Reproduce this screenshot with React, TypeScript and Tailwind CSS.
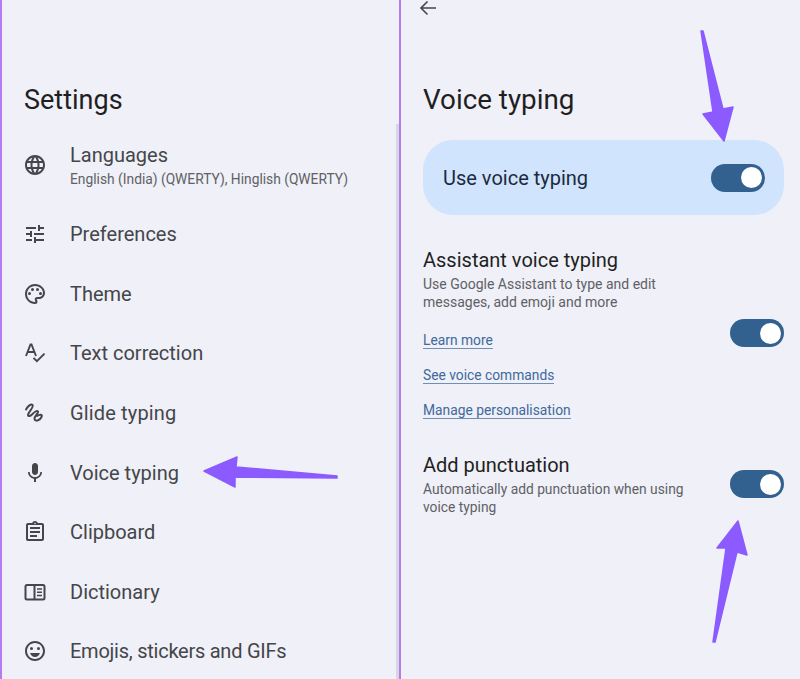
import React from "react";
import { MdLanguage, MdOutlineTune, MdOutlinePalette, MdMic, MdOutlineEmojiEmotions, MdOutlineAssignment } from "react-icons/md";

const SpellIcon = () => (
  <svg width="24" height="24" viewBox="0 0 24 24" fill="none" stroke="currentColor" strokeWidth="1.900">
    <path d="M3 15 7.500 3.500h1L13 15M4.800 11h6.400" />
    <path d="M10.500 16.800l3.400 3.400 7.600-7.600" />
  </svg>
);
const DrawIcon = () => (
  <svg width="24" height="24" viewBox="0 0 24 24" fill="none" stroke="currentColor" strokeWidth="2" strokeLinecap="round">
    <path d="M3 8.500C5 5 8 2.500 9.500 4S7 9.500 5.500 12.500 6.500 16 9 13.500 14 9 15 10.500 11 15 11.500 18 17 19.500 18.500 16 16 13.500 14 15" />
  </svg>
);
const BookIcon = () => (
  <svg width="24" height="24" viewBox="0 0 24 24" fill="none" stroke="currentColor" strokeWidth="2">
    <rect x="2.500" y="5" width="19" height="14.500" rx="1.500" />
    <path d="M11.500 5v14.500" />
    <path strokeWidth="1.500" d="M14 9h5M14 12.200h5M14 15.400h5" />
  </svg>
);

const rows = [
  { icon: <MdOutlineTune size={24} />, label: "Preferences", cls: "" },
  { icon: <MdOutlinePalette size={24} />, label: "Theme", cls: "" },
  { icon: <SpellIcon />, label: "Text correction", cls: "" },
  { icon: <DrawIcon />, label: "Glide typing", cls: "tracking-[0.15px]" },
  { icon: <MdMic size={24} />, label: "Voice typing", cls: "" },
  { icon: <MdOutlineAssignment size={24} />, label: "Clipboard", cls: "" },
  { icon: <BookIcon />, label: "Dictionary", cls: "" },
  { icon: <MdOutlineEmojiEmotions size={24} />, label: "Emojis, stickers and GIFs", cls: "tracking-[-0.25px]" },
];

const Toggle = () => (
  <div className="flex h-[28px] w-[54px] shrink-0 items-center justify-end rounded-full bg-[#33618f] pr-[3px]">
    <div className="h-[21px] w-[21px] rounded-full bg-white" />
  </div>
);

const Link = ({ children }: { children: React.ReactNode }) => (
  <div className="h-[35px]">
    <span className="border-b border-[#6f8fb3] text-[13.800px] leading-[18px] text-[#41699a]">{children}</span>
  </div>
);

export default function App() {
  return (
    <div className="relative flex h-[679px] w-[800px] overflow-hidden bg-[#eff0f8] text-[#444649]" style={{ fontFamily: "Roboto, 'Noto Sans', sans-serif" }}>
      <div className="relative h-full w-[399px] shrink-0 border-l-[2px] border-[#b57bf0] pl-[22px]">
        <h1 className="mt-[82px] text-[27px] leading-[36px] font-normal text-[#1f1f1f]">Settings</h1>
        <div className="mt-[17px] flex h-[60px] items-center">
          <div className="-ml-[1px] w-[47px] shrink-0"><MdLanguage size={24} /></div>
          <div>
            <div className="text-[20px] leading-[26px]">Languages</div>
            <div className="mt-[1px] text-[13.800px] leading-[20px] text-[#5f6165]">English (India) (QWERTY), Hinglish (QWERTY)</div>
          </div>
        </div>
        <div className="mt-[9.500px]">
          {rows.map((r) => (
            <div key={r.label} className="flex h-[59.600px] items-center">
              <div className="-ml-[1px] w-[47px] shrink-0">{r.icon}</div>
              <div className={`text-[20px] leading-[26px] ${r.cls}`}>{r.label}</div>
            </div>
          ))}
        </div>
        <div className="absolute top-[124px] right-0 bottom-0 w-[3px] bg-[#d6d8de]" />
      </div>

      <div className="h-full flex-1 border-l-[2px] border-[#b57bf0] pr-[16px] pl-[22px]">
        <svg className="-mt-[4px] -ml-[7px] block text-[#444649]" width="24" height="24" viewBox="0 0 24 24" fill="none" stroke="currentColor" strokeWidth="1.600">
          <path d="M20 12H5M11.500 5.500 5 12l6.500 6.500" />
        </svg>
        <h1 className="mt-[62px] text-[27.800px] leading-[36px] font-normal text-[#1f1f1f]">Voice typing</h1>
        <div className="mt-[22px] flex h-[75px] items-center justify-between rounded-[30px] bg-[#d1e4fe] pr-[19px] pl-[20px]">
          <span className="text-[20px] text-[#1b2a3c]">Use voice typing</span>
          <Toggle />
        </div>
        <div className="mt-[32px] flex items-start justify-between">
          <div>
            <div className="text-[20px] leading-[26px] text-[#1f1f1f]">Assistant voice typing</div>
            <div className="mt-[3px] text-[14px] leading-[17.500px] text-[#5f6165]">Use Google Assistant to type and edit<br />messages, add emoji and more</div>
            <div className="mt-[17px]">
              <Link>Learn more</Link>
              <Link>See voice commands</Link>
              <Link>Manage personalisation</Link>
            </div>
          </div>
          <div className="mt-[72px]"><Toggle /></div>
        </div>
        <div className="mt-[19px] flex items-start justify-between">
          <div>
            <div className="text-[20px] leading-[26px] text-[#1f1f1f]">Add punctuation</div>
            <div className="mt-[3px] text-[13.800px] leading-[17.500px] text-[#5f6165]">Automatically add punctuation when using<br />voice typing</div>
          </div>
          <div className="mt-[18px]"><Toggle /></div>
        </div>
      </div>

      <svg className="pointer-events-none absolute inset-0" width="800" height="679" viewBox="0 0 800 679" fill="#8b5bff" stroke="#8b5bff" strokeWidth="1.500" strokeLinejoin="round">
        <path d="M204 471 237 457 236 467 337 476 337 478 235 477 235 487Z" />
        <path d="M701 31 703 31 723 109 733 107 724 141 703 114 713 112Z" />
        <path d="M738 521 747 555 737 552 715 642 713 642 726 548 717 548Z" />
      </svg>
    </div>
  );
}
